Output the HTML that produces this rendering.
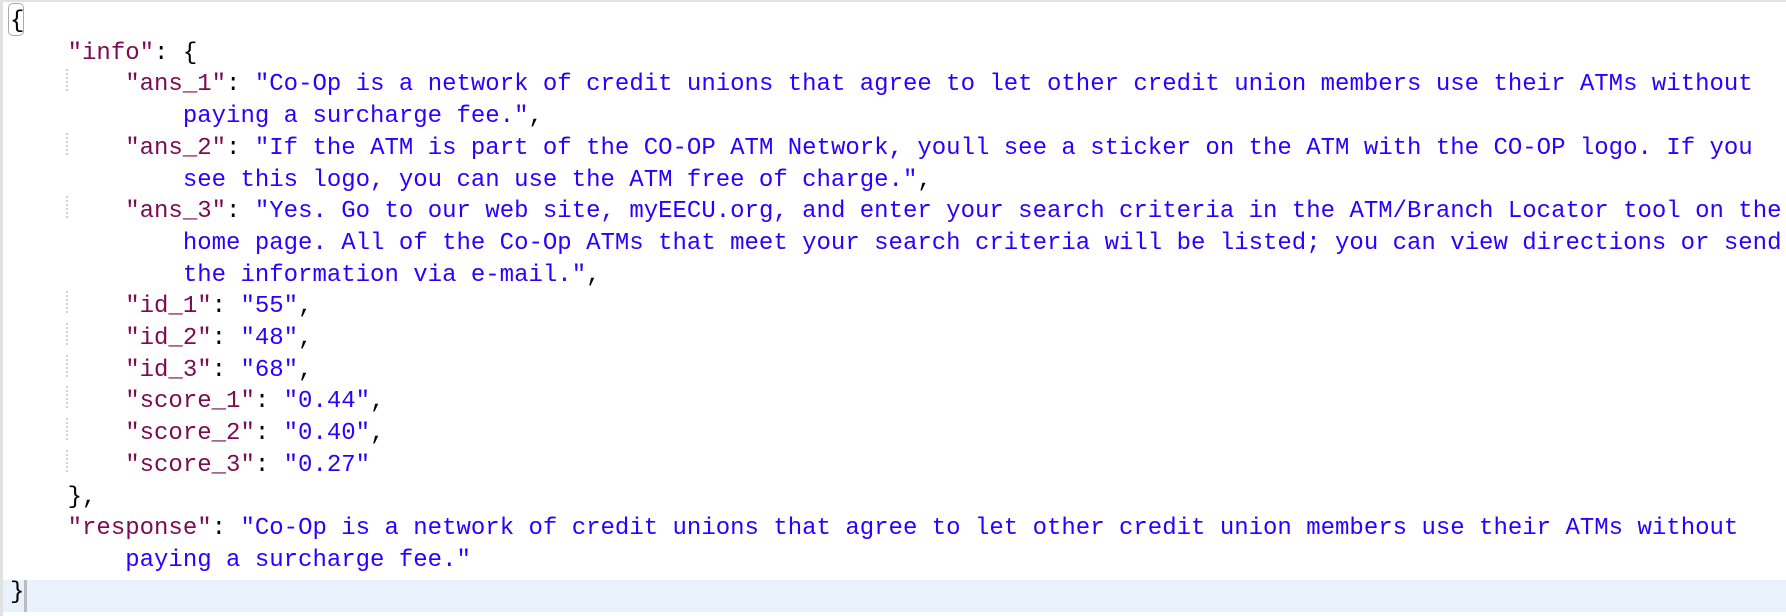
<!DOCTYPE html>
<html><head><meta charset="utf-8"><style>
html,body{margin:0;padding:0;background:#fff;width:1786px;height:616px;overflow:hidden;position:relative}
.top{position:absolute;left:0;top:0;width:1786px;height:2px;background:#e2e2e2}
.left{position:absolute;left:0;top:0;width:3px;height:616px;background:#e2e2e2}
.hl{position:absolute;left:3px;top:580px;width:1783px;height:32px;background:#e8f1fc}
.cur{position:absolute;left:24px;top:580px;width:3px;height:32px;background:#b9bdc2}
.box{position:absolute;left:8px;top:3px;width:16px;height:33px;border:1px solid #aaa;border-radius:5px;box-sizing:border-box}
pre{position:absolute;left:10px;top:6px;margin:0;font-family:"Liberation Mono",monospace;font-size:24px;line-height:31.7px;color:#000}
.k{color:#7b0b52}.s{color:#2a00ff}
.g{position:absolute;left:66px;width:0;border-left:2px dotted #d0d0d0;height:22px}
</style></head><body>
<div class="top"></div><div class="left"></div><div class="hl"></div><div class="cur"></div><div class="box"></div>
<div class="g" style="top:69px"></div>
<div class="g" style="top:133px"></div>
<div class="g" style="top:196px"></div>
<div class="g" style="top:291px"></div>
<div class="g" style="top:323px"></div>
<div class="g" style="top:355px"></div>
<div class="g" style="top:386px"></div>
<div class="g" style="top:418px"></div>
<div class="g" style="top:450px"></div>
<pre>{
    <span class="k">"info"</span>: {
        <span class="k">"ans_1"</span>: <span class="s">"Co-Op is a network of credit unions that agree to let other credit union members use their ATMs without</span>
            <span class="s">paying a surcharge fee."</span>,
        <span class="k">"ans_2"</span>: <span class="s">"If the ATM is part of the CO-OP ATM Network, youll see a sticker on the ATM with the CO-OP logo. If you</span>
            <span class="s">see this logo, you can use the ATM free of charge."</span>,
        <span class="k">"ans_3"</span>: <span class="s">"Yes. Go to our web site, myEECU.org, and enter your search criteria in the ATM/Branch Locator tool on the</span>
            <span class="s">home page. All of the Co-Op ATMs that meet your search criteria will be listed; you can view directions or send</span>
            <span class="s">the information via e-mail."</span>,
        <span class="k">"id_1"</span>: <span class="s">"55"</span>,
        <span class="k">"id_2"</span>: <span class="s">"48"</span>,
        <span class="k">"id_3"</span>: <span class="s">"68"</span>,
        <span class="k">"score_1"</span>: <span class="s">"0.44"</span>,
        <span class="k">"score_2"</span>: <span class="s">"0.40"</span>,
        <span class="k">"score_3"</span>: <span class="s">"0.27"</span>
    },
    <span class="k">"response"</span>: <span class="s">"Co-Op is a network of credit unions that agree to let other credit union members use their ATMs without</span>
        <span class="s">paying a surcharge fee."</span>
}</pre>
</body></html>
